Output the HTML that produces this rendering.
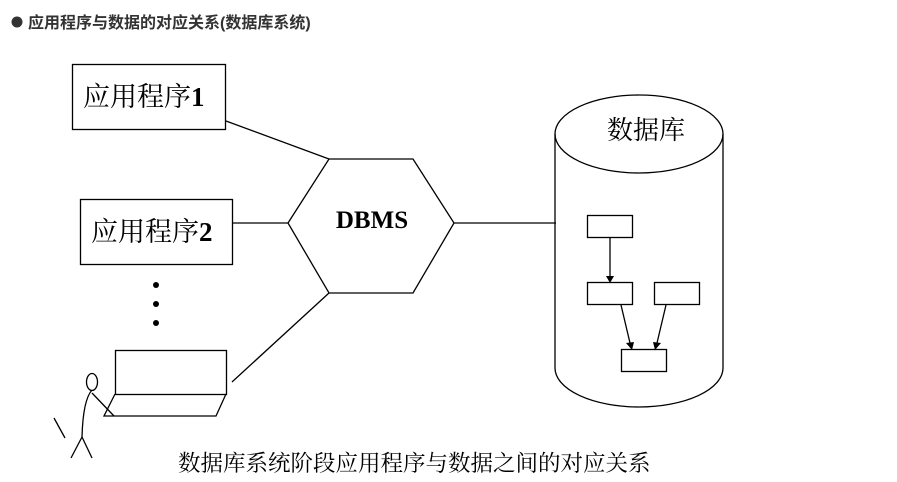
<!DOCTYPE html>
<html><head><meta charset="utf-8"><style>
body{margin:0;width:897px;height:482px;background:#fff;overflow:hidden;position:relative}
svg{position:absolute;left:0;top:0}
.t{font-family:"Liberation Serif","Noto Serif CJK SC",serif}
</style></head><body>
<svg width="897" height="482" viewBox="0 0 897 482">
<circle cx="17" cy="22" r="5.5" fill="#333"/>
<text x="28" y="28" font-family="'Liberation Sans','Noto Sans CJK SC',sans-serif" font-size="16" font-weight="bold" fill="#333">应用程序与数据的对应关系(数据库系统)</text>
<g fill="none" stroke="#000" stroke-width="1.3">
<rect x="72.5" y="64.5" width="153" height="65"/>
<rect x="80.5" y="199.5" width="152" height="65"/>
<polygon points="288,223 329,159 413,159 454,223 413,293 329,293"/>
<line x1="226" y1="121" x2="329" y2="159"/>
<line x1="233" y1="223" x2="288" y2="223"/>
<line x1="454" y1="223" x2="556" y2="223"/>
<line x1="329" y1="293" x2="232" y2="382"/>
<rect x="115.5" y="350.5" width="111" height="44"/>
<polyline points="226,394 216,416 104,416 115,394"/>
<ellipse cx="92" cy="382" rx="5.5" ry="8.5"/>
<path d="M92,390 Q83,400 82,437"/>
<line x1="92" y1="393" x2="114" y2="416"/>
<line x1="82" y1="437" x2="71" y2="458"/>
<line x1="82" y1="437" x2="92" y2="458"/>
<line x1="54" y1="418" x2="65" y2="438"/>
<path d="M555,134 L555,368 A84,39 0 0 0 723,368 L723,134"/>
<ellipse cx="639" cy="134" rx="84" ry="39"/>
<rect x="587.5" y="215.5" width="45" height="22"/>
<rect x="587.5" y="282.5" width="45" height="22"/>
<rect x="654.5" y="282.5" width="45" height="22"/>
<rect x="621.5" y="349.5" width="45" height="22"/>
<line x1="610" y1="238" x2="610" y2="276"/>
<line x1="621" y1="305" x2="630" y2="343"/>
<line x1="666" y1="305" x2="657" y2="343"/>
</g>
<g fill="#000">
<polygon points="606,276 614,276 610,283"/>
<polygon points="626,343 634,342 632,350"/>
<polygon points="653,342 661,343 655,350"/>
<circle cx="156" cy="285" r="3"/><circle cx="156" cy="304" r="3"/><circle cx="156" cy="323" r="3"/>
</g>
<text class="t" x="83" y="106" font-size="27">应用程序<tspan font-weight="bold">1</tspan></text>
<text class="t" x="91" y="241" font-size="27">应用程序<tspan font-weight="bold">2</tspan></text>
<text class="t" x="372" y="228" font-size="25" font-weight="bold" text-anchor="middle">DBMS</text>
<text class="t" x="607" y="139" font-size="26">数据库</text>
<text class="t" x="178" y="471" font-size="22.5">数据库系统阶段应用程序与数据之间的对应关系</text>
</svg>
</body></html>
